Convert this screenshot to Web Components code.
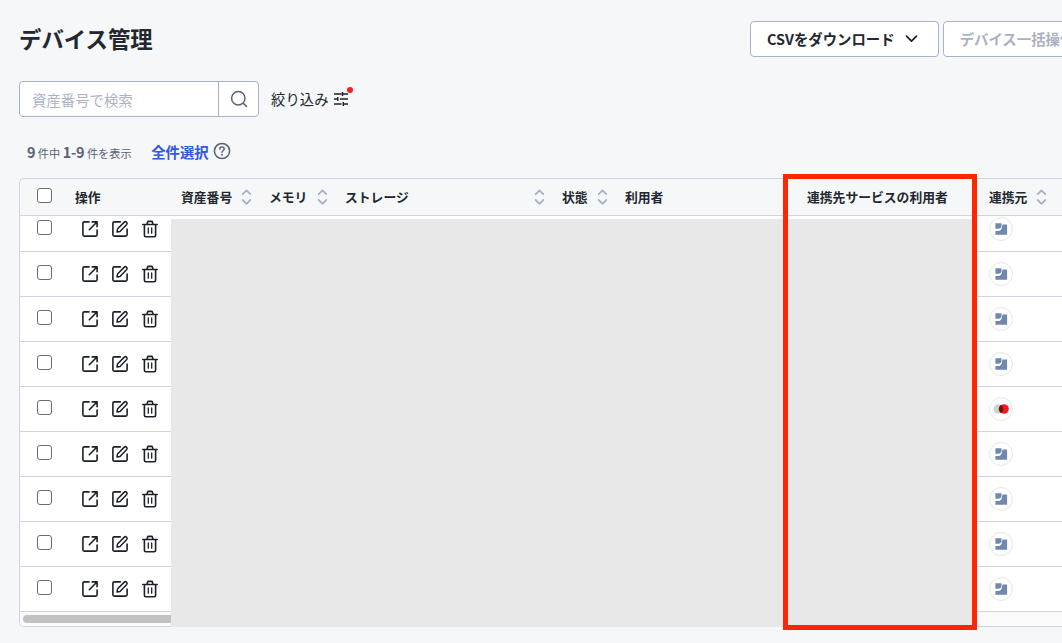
<!DOCTYPE html>
<html lang="ja">
<head>
<meta charset="utf-8">
<title>デバイス管理</title>
<style>
html,body{margin:0;height:100%;overflow:hidden}
body{background:#f5f7f9;color:#23272e;font-family:"Noto Sans CJK JP","Noto Sans",sans-serif;font-size:14.4px}
</style>
</head>
<body>
<device-page></device-page>
<script>
function define(name, html) {
  customElements.define(name, class extends HTMLElement {
    connectedCallback() {
      if (this.shadowRoot) return;
      const t = document.createElement('template');
      t.innerHTML = typeof html === 'function' ? html(this) : html;
      this.attachShadow({ mode: 'open' }).appendChild(t.content.cloneNode(true));
    }
  });
}

const icons = {
  search: [20, '<g stroke="#596275" stroke-width="1.5"><circle cx="9.3" cy="9.3" r="6.7"/><path d="M14.2 14.2 17.4 17.4"/></g>'],
  chevron: [14, '<path d="M2.5 4.2 7.5 9.2 12.5 4.2" stroke-width="1.7"/>'],
  help: [18, '<g stroke="#596275" stroke-width="1.5"><circle cx="9" cy="9" r="7.6"/><path d="M6.8 7.1C6.9 5.7 7.8 5 9 5s2.2.8 2.2 1.9C11.2 8.4 9 8.6 9 10.3"/><path d="M9 12.6v.4" stroke-width="1.7"/></g>'],
  filter: [16, '<path d="M1 3h7.5M9.5 3h5.5M9.5 1v4M1 8h3.5M7 8h8M4.8 6v4M1 13h7.5M11 13h4M10.3 11v4" stroke-width="1.4" stroke-linecap="butt"/>'],
  open: [18, '<path d="M8 1.9H3.2Q1.9 1.9 1.9 3.2v11.6q0 1.3 1.3 1.3h11.6q1.3 0 1.3-1.3V10M11.2 1.9h4.9v4.9M15.7 2.3 8.3 9.7" stroke-width="1.6"/>'],
  edit: [18, '<path d="M9.3 1.9H3.2Q1.9 1.9 1.9 3.2v11.6q0 1.3 1.3 1.3h11.6q1.3 0 1.3-1.3V9" stroke-width="1.6"/><path d="M6 12.1 6.5 9 13.3 2.1q1.2-1 2.3.1t.1 2.3L9 11.4Z" stroke-width="1.5"/>'],
  trash: [18, '<path d="M1.8 4.5h14.4M3.4 4.7v10.6q0 1.5 1.5 1.5h8.2q1.5 0 1.5-1.5V4.7M6 4.2 6.6 2q.2-.6.8-.6h3.2q.6 0 .8.6l.6 2.2" stroke-width="1.6"/><path d="M7.3 8v5.2M10.7 8v5.2" stroke-width="1.3"/>']
};
define('ui-icon', el => {
  const [s, p] = icons[el.getAttribute('name')];
  return `<style>:host{display:block;flex:none;white-space:normal}svg{display:block}</style>
  <svg width="${s}" height="${s}" viewBox="0 0 ${s} ${s}" fill="none" stroke="#1c2027" stroke-linecap="round" stroke-linejoin="round">${p}</svg>`;
});

define('sort-icon', `<style>:host{display:block;flex:none;white-space:normal}svg{display:block}</style>
<svg width="10" height="16" fill="none" stroke="#aab1c6" stroke-width="1.8" stroke-linecap="round" stroke-linejoin="round"><path d="M1.7 5.2 5.5 1.4 9.3 5.2M1.7 11 5.5 14.8 9.3 11"/></svg>`);

define('check-box', `<style>:host{display:block;flex:none;box-sizing:border-box;width:15px;height:15px;border:1px solid #6c6c6c;border-radius:3px;background:#fff}</style>`);

define('ui-button', `<style>
:host{display:flex;box-sizing:border-box;flex:none;height:36px;align-items:center;gap:9.5px;padding:0 19.5px 0 16px;border:1px solid #a9b1c6;border-radius:4px;background:#fff;font-weight:700;white-space:nowrap}
:host([disabled]){color:#aab1c3}
span{padding-bottom:2px}
</style><span><slot></slot></span><slot name="icon"></slot>`);

define('search-box', `<style>
:host{display:flex;box-sizing:border-box;width:240px;height:36px;border:1px solid #a9b1c6;border-radius:4px;background:#fff;overflow:hidden}
.t{flex:1;padding:0 0 0 12px;line-height:35px;color:#acb3c5}
.b{display:grid;place-items:center;box-sizing:border-box;width:40px;border-left:1px solid #a9b1c6}
</style><div class="t"><slot></slot></div><div class="b"><ui-icon name="search"></ui-icon></div>`);

define('filter-link', `<style>
:host{display:flex;align-items:center;gap:4px;position:relative;height:36px}
span{padding-bottom:2px}
i{position:absolute;width:6px;height:6px;border-radius:50%;background:#ff1d25;right:-4px;top:6px}
</style><span><slot></slot></span><ui-icon name="filter"></ui-icon><i></i>`);

define('head-cell', el => `<style>
:host{display:flex;align-items:center;justify-content:space-between;padding:0 8px 0 10px;font-size:12.8px;font-weight:700;white-space:nowrap}
span{padding-bottom:2px}
</style><span><slot></slot></span>${el.hasAttribute('sort') ? '<sort-icon></sort-icon>' : ''}`);

define('source-badge', el => `<style>
:host{display:grid;place-items:center;box-sizing:border-box;width:24px;height:24px;border:1px solid #e4e6ef;border-radius:50%;background:#fff}
svg{display:block}</style>
<svg width="16" height="14" viewBox="0 0 16 14">${el.getAttribute('kind') === 'red'
  ? '<circle cx="5.2" cy="7" r="4.7" fill="#c6d6c9"/><circle cx="11" cy="7" r="4.8" fill="#ed1b24"/><path d="M8 3.2a4.8 4.8 0 0 1 0 7.6 4.8 4.8 0 0 1 0-7.6Z" fill="#711208" stroke="#711208" stroke-width=".8"/>'
  : '<path d="M2.4 1.3h6.1v3.4q-1 2.1-3 2.1H2.4Z" fill="#7088ae"/><path d="M9.5 2.6h4.6v10.2H2.4V9.1h3.2q2.9-.4 3.4-4.1Z" fill="#7088ae"/>'}</svg>`);

define('device-row', el => `<style>
:host{display:grid;grid-template-columns:45px 106px 808px 1fr;box-sizing:border-box;height:45px;border-bottom:1px solid #cdd3e2;background:#fff;align-items:center}
check-box{margin:-3px 0 0 17px}
.a{display:flex;gap:12px;padding-left:16px}
source-badge{margin-left:10px}
</style><check-box></check-box>
<div class="a"><ui-icon name="open"></ui-icon><ui-icon name="edit"></ui-icon><ui-icon name="trash"></ui-icon></div>
<span></span><source-badge kind="${el.getAttribute('kind')}"></source-badge>`);

define('device-table', `<style>
:host{display:block;box-sizing:border-box;height:449px;position:relative;border:1px solid #cdd3e2;border-right:0;border-radius:5px 0 0 5px}
.h{display:grid;grid-template-columns:45px 106px 88px 76px 217px 63px 182px 182px 75px;height:36px;border-bottom:1px solid #cdd3e2}
.h check-box{margin:9px 0 0 17px}
.body{overflow:hidden;height:396px}
.body device-row:first-child{margin-top:-9px}
.bar{height:14px;background:#fafafa;box-sizing:border-box;padding:3px 0 0 3px;border-radius:0 0 0 4px}
.thumb{height:8px;width:300px;border-radius:4px;background:#c1c1c1}
.mask{position:absolute;left:151px;top:40px;width:804px;height:408px;background:#e8e8e8}
.frame{position:absolute;box-sizing:border-box;left:763px;top:-5px;width:194px;height:456px;border:5px solid #ff2500}
</style>
<div class="h"><check-box></check-box><head-cell>操作</head-cell><head-cell sort>資産番号</head-cell><head-cell sort>メモリ</head-cell><head-cell sort>ストレージ</head-cell><head-cell sort>状態</head-cell><head-cell>利用者</head-cell><head-cell>連携先サービスの利用者</head-cell><head-cell sort>連携元</head-cell></div>
<div class="body">${[0,1,2,3,4,5,6,7,8].map(i => `<device-row kind="${i === 4 ? 'red' : 'blue'}"></device-row>`).join('')}</div>
<div class="bar"><div class="thumb"></div></div>
<div class="mask"></div><div class="frame"></div>`);

define('device-page', `<style>
:host{display:block;box-sizing:border-box;width:1062px;height:643px;padding:21px 0 0 19px;overflow:hidden}
header{display:flex;height:36px;align-items:center}
h1{flex:none;margin:0;width:731px;font-size:22.4px;line-height:34px;height:36px;font-weight:700}
.btns{display:flex;flex:none;gap:4px}
.tools{display:flex;gap:12px;margin-top:24px}
.count{display:flex;align-items:center;height:24px;margin:22px 0 15px;padding-left:8px;color:#596275;font-size:11.2px;white-space:pre}
b{font-size:14.4px;font-weight:700;letter-spacing:-.2px}
.all{color:#3157e0;font-size:14.4px;font-weight:700;margin:0 4.5px 0 19.5px}
.count ui-icon{margin-top:0}
</style>
<header><h1>デバイス管理</h1><div class="btns"><ui-button>CSVをダウンロード<ui-icon slot="icon" name="chevron"></ui-icon></ui-button><ui-button disabled>デバイス一括操作</ui-button></div></header>
<div class="tools"><search-box>資産番号で検索</search-box><filter-link>絞り込み</filter-link></div>
<div class="count"><span><b>9</b> 件中 <b>1-9</b> 件を表示</span><span class="all">全件選択</span><ui-icon name="help"></ui-icon></div>
<device-table></device-table>`);
</script>
</body>
</html>
